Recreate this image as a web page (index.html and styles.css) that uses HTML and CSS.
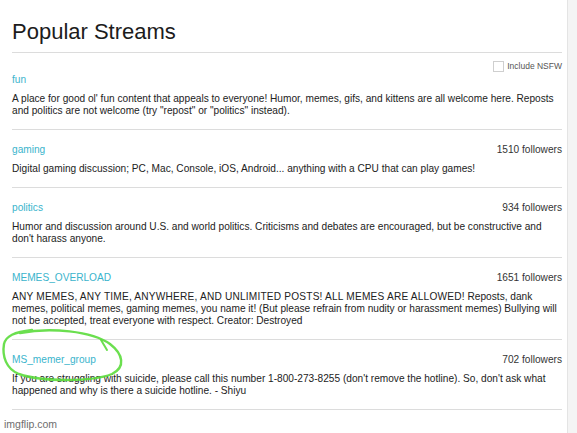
FILE: index.html
```html
<!DOCTYPE html>
<html>
<head>
<meta charset="utf-8">
<link rel="stylesheet" href="styles.css">
</head>
<body>
<div class="page">
  <h1 class="title">Popular Streams</h1>
  <div class="nsfw">
    <span class="checkbox"></span>
    <span class="nsfw-label">Include NSFW</span>
  </div>
  <div class="stream first">
    <div class="stream-head"><span class="name">fun</span></div>
    <div class="desc">A place for good ol' fun content that appeals to everyone! Humor, memes, gifs, and kittens are all welcome here. Reposts and politics are not welcome (try "repost" or "politics" instead).</div>
  </div>
  <div class="stream">
    <div class="stream-head"><span class="name">gaming</span><span class="followers">1510 followers</span></div>
    <div class="desc">Digital gaming discussion; PC, Mac, Console, iOS, Android... anything with a CPU that can play games!</div>
  </div>
  <div class="stream">
    <div class="stream-head"><span class="name">politics</span><span class="followers">934 followers</span></div>
    <div class="desc">Humor and discussion around U.S. and world politics. Criticisms and debates are encouraged, but be constructive and don't harass anyone.</div>
  </div>
  <div class="stream">
    <div class="stream-head"><span class="name">MEMES_OVERLOAD</span><span class="followers">1651 followers</span></div>
    <div class="desc"><span class="shout">ANY MEMES, ANY TIME, ANYWHERE, AND UNLIMITED POSTS! ALL MEMES ARE ALLOWED!</span> Reposts, dank memes, political memes, gaming memes, you name it! (But please refrain from nudity or harassment memes) Bullying will not be accepted, treat everyone with respect. Creator: Destroyed</div>
  </div>
  <div class="stream">
    <div class="stream-head"><span class="name">MS_memer_group</span><span class="followers">702 followers</span></div>
    <div class="desc">If you are struggling with suicide, please call this number 1-800-273-8255 (don't remove the hotline). So, don't ask what happened and why is there a suicide hotline. - Shiyu</div>
  </div>
</div>
<svg class="scribble" width="577" height="433" viewBox="0 0 577 433">
  <path d="M20 333 C50 327 92 331 110 344 C123 354 126 367 112 374 C92 382 42 382 19 374 C6 369 2 356 4 344 C6 336 14 332 32 330" fill="none" stroke="#5bdc3c" stroke-width="2.4" stroke-linecap="round" opacity="0.9"/>
  <path d="M101 340 L107 350" fill="none" stroke="#5bdc3c" stroke-width="2" stroke-linecap="round" opacity="0.9"/>
</svg>
<div class="watermark">imgflip.com</div>
</body>
</html>
```
FILE: styles.css
```css
html, body {
  margin: 0;
  padding: 0;
}
body {
  background: #f4f4f4;
  font-family: "Liberation Sans", Arial, sans-serif;
  width: 577px;
  height: 433px;
  overflow: hidden;
  position: relative;
}
.page {
  width: 568px;
  height: 433px;
  box-sizing: border-box;
  padding: 0 5px 0 12px;
  background: #fff;
  border-right: 1px solid #e4e4e4;
}
.title {
  margin: 0;
  padding: 19px 0 8px;
  font-size: 22px;
  line-height: 25px;
  font-weight: normal;
  color: #1c1c1c;
  border-bottom: 1px solid #dcdcdc;
}
.nsfw {
  display: flex;
  justify-content: flex-end;
  align-items: center;
  gap: 3px;
  margin-top: 7px;
  height: 12px;
}
.checkbox {
  width: 11px;
  height: 11px;
  box-sizing: border-box;
  border: 1px solid #cfcfcf;
  background: #fff;
}
.nsfw-label {
  font-size: 8.5px;
  color: #555;
}
.stream {
  padding: 14px 0 12px;
  border-bottom: 1px solid #dcdcdc;
}
.stream.first {
  padding-top: 2px;
}
.stream-head {
  display: flex;
  justify-content: space-between;
  height: 12px;
  line-height: 12px;
  font-size: 10.15px;
}
.name {
  color: #3ab4cc;
}
.followers {
  color: #333;
}
.desc {
  margin-top: 7px;
  font-size: 10.15px;
  line-height: 12px;
  color: #222;
}
.shout {
  letter-spacing: 0.2px;
}
.scribble {
  position: absolute;
  left: 0;
  top: 0;
  pointer-events: none;
}
.watermark {
  position: absolute;
  left: 4px;
  top: 418px;
  font-size: 10.5px;
  line-height: 13px;
  color: #6e6e6e;
}
```
